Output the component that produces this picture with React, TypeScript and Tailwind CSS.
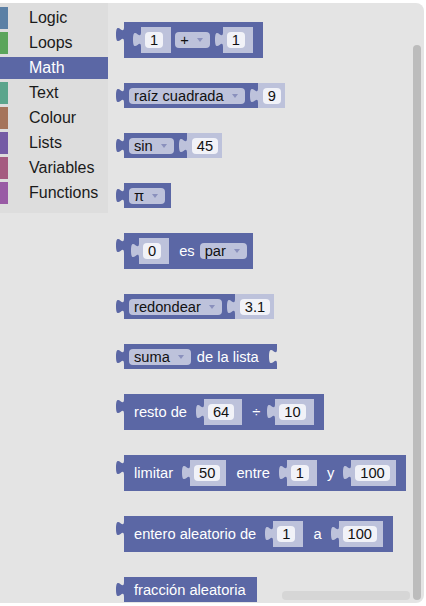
import type React from "react"

const BLOCK = "#5b67a5"
const LIGHT = "#bdc2db"
const FLY = "#e4e4e4"

const categories = [
  { name: "Logic", color: "bg-[#5b80a5]" },
  { name: "Loops", color: "bg-[#5ba55b]" },
  { name: "Math", color: "bg-[#5b67a5]", selected: true },
  { name: "Text", color: "bg-[#5ba58c]" },
  { name: "Colour", color: "bg-[#a5745b]" },
  { name: "Lists", color: "bg-[#745ba5]" },
  { name: "Variables", color: "bg-[#a55b80]" },
  { name: "Functions", color: "bg-[#995ba5]" },
]

// puzzle tab, drawn like blockly's TAB_PATH_DOWN
const Tab = ({ color, h }: { color: string; h: number }) => (
  <svg width="8" height={h} className="block shrink-0 self-start">
    <path d="M8 5 C8 15 0 -3 0 12.5 C0 28 8 10 8 20 Z" fill={color} />
  </svg>
)

const Field = ({ children }: { children: React.ReactNode }) => (
  <span className="flex h-[16px] items-center rounded-[4px] bg-[#f1f2f8] px-[5px] text-[#111]">{children}</span>
)

const Dropdown = ({ children, className = "" }: { children: React.ReactNode; className?: string }) => (
  <span className={`flex h-[16px] items-center rounded-[4px] bg-[#bdc2db] pl-[5px] pr-[7px] text-[#111] ${className}`}>
    {children}
    <svg width="6" height="4" className="ml-[8px] block">
      <polygon points="0,0 6,0 3,4" fill="#8a90bd" />
    </svg>
  </span>
)

const Label = ({ children, className = "" }: { children: React.ReactNode; className?: string }) => (
  <span className={`text-white ${className}`}>{children}</span>
)

// value input with its shadow block sitting inside the parent
const Inline = ({ value, className = "", pr = "pr-[8px]" }: { value: string; className?: string; pr?: string }) => (
  <div className={`mt-[5px] flex self-start ${className}`}>
    <Tab color={LIGHT} h={26} />
    <div className={`flex h-[26px] items-center bg-[#bdc2db] pl-[4px] ${pr}`}>
      <Field>{value}</Field>
    </div>
  </div>
)

const Block = ({
  tall,
  className = "",
  children,
  after,
}: {
  tall?: boolean
  className?: string
  children: React.ReactNode
  after?: React.ReactNode
}) => (
  <div className="flex items-start">
    <Tab color={BLOCK} h={20} />
    <div className={`flex items-center bg-[#5b67a5] ${tall ? "h-[36px]" : "h-[25px]"} ${className}`}>{children}</div>
    {after}
  </div>
)

// shadow block plugged into an external input on the right edge
const External = ({ value }: { value: string }) => (
  <div className="flex h-[25px] items-center bg-[#bdc2db] pl-[5px] pr-[4px]">
    <Field>{value}</Field>
  </div>
)

const App: React.FC = () => {
  return (
    <div className="h-[606px] w-[426px] overflow-hidden bg-white font-['Liberation_Sans',Arial,sans-serif] text-[14.67px]">
      <div className="relative mt-[3px] flex h-[600px] w-[424px] overflow-hidden rounded-r-[8px] bg-[#e4e4e4]">
        <div className="w-[108px] shrink-0">
          <div className="bg-[#dddddd] pb-[6px] pt-[4px]">
            {categories.map((c) => (
              <div
                key={c.name}
                className={`mb-[3px] flex h-[22px] items-center text-[16px] ${
                  c.selected ? "bg-[#5b67a5] text-white" : "text-[#1a1a1a]"
                }`}
              >
                <div className={`h-full w-[8px] ${c.selected ? "" : c.color}`}></div>
                <span className="ml-[21px]">{c.name}</span>
              </div>
            ))}
          </div>
        </div>

        <div className="flex flex-1 flex-col items-start gap-[25px] pl-[8px] pt-[19px]">
          <Block tall className="pl-[9px] pr-[10px]">
            <Inline value="1" />
            <Dropdown className="ml-[4px]">+</Dropdown>
            <Inline value="1" className="ml-[5px]" />
          </Block>

          <Block className="pl-[5px]" after={<External value="9" />}>
            <Dropdown>raíz cuadrada</Dropdown>
            <div className="ml-[5px] self-start">
              <Tab color={LIGHT} h={25} />
            </div>
          </Block>

          <Block className="pl-[5px]" after={<External value="45" />}>
            <Dropdown>sin</Dropdown>
            <div className="ml-[5px] self-start">
              <Tab color={LIGHT} h={25} />
            </div>
          </Block>

          <Block className="pl-[5px] pr-[6px]">
            <Dropdown>π</Dropdown>
          </Block>

          <Block tall className="pl-[7px] pr-[6px]">
            <Inline value="0" />
            <Label className="ml-[10px]">es</Label>
            <Dropdown className="ml-[5px]">par</Dropdown>
          </Block>

          <Block className="pl-[5px]" after={<External value="3.1" />}>
            <Dropdown>redondear</Dropdown>
            <div className="ml-[5px] self-start">
              <Tab color={LIGHT} h={25} />
            </div>
          </Block>

          <Block className="pl-[5px]">
            <Dropdown>suma</Dropdown>
            <Label className="ml-[6px]">de la lista</Label>
            <div className="ml-[10px] self-start">
              <Tab color={FLY} h={25} />
            </div>
          </Block>

          <Block tall className="pl-[10px] pr-[10px]">
            <Label>resto de</Label>
            <Inline value="64" className="ml-[9px]" />
            <Label className="ml-[10px]">÷</Label>
            <Inline value="10" className="ml-[7px]" />
          </Block>

          <Block tall className="pl-[10px] pr-[10px]">
            <Label>limitar</Label>
            <Inline value="50" className="ml-[9px]" pr="pr-[6px]" />
            <Label className="ml-[10px]">entre</Label>
            <Inline value="1" className="ml-[9px]" />
            <Label className="ml-[10px]">y</Label>
            <Inline value="100" className="ml-[9px]" pr="pr-[6px]" />
          </Block>

          <Block tall className="pl-[10px] pr-[10px]">
            <Label>entero aleatorio de</Label>
            <Inline value="1" className="ml-[9px]" />
            <Label className="ml-[10px]">a</Label>
            <Inline value="100" className="ml-[9px]" pr="pr-[6px]" />
          </Block>

          <Block className="pl-[10px] pr-[11px]">
            <Label>fracción aleatoria</Label>
          </Block>
        </div>

        {/* scrollbars */}
        <div className="absolute left-[413px] top-[42px] h-[555px] w-[8px] rounded-[4px] bg-[#bcbcbc]"></div>
        <div className="absolute left-[282px] top-[588px] h-[9px] w-[128px] rounded-[4px] bg-[#d6d6d6]"></div>
      </div>
    </div>
  )
}

export default App
